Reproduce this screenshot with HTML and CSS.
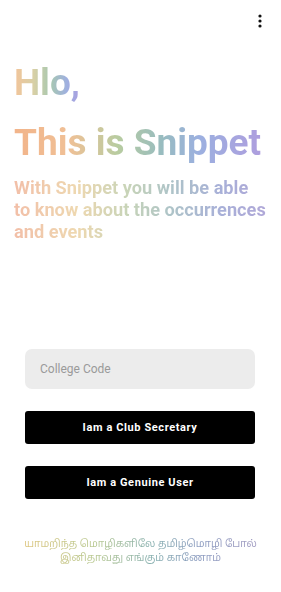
FILE: index.html
```html
<!DOCTYPE html>
<html>
<head>
<meta charset="utf-8">
<link rel="stylesheet" href="styles.css">
</head>
<body>
<div class="screen">
  <div class="topbar">
    <svg class="kebab" width="4" height="14" viewBox="0 0 4 14"><circle cx="2" cy="2" r="1.6"/><circle cx="2" cy="7" r="1.6"/><circle cx="2" cy="12" r="1.6"/></svg>
  </div>
  <div class="hero">
    <h1 class="title"><span class="grad g1">Hlo,</span></h1>
    <h1 class="title second"><span class="grad g2">This is Snippet</span></h1>
    <p class="lead grad g3">With Snippet you will be able<br>to know about the occurrences<br>and events</p>
  </div>
  <div class="form">
    <div class="input">College Code</div>
    <button class="btn">Iam a Club Secretary</button>
    <button class="btn">Iam a Genuine User</button>
  </div>
  <div class="quote-wrap"><p class="quote grad g4">யாமறிந்த மொழிகளிலே தமிழ்மொழி போல்<br>இனிதாவது எங்கும் காணோம்</p></div>
</div>
</body>
</html>
```
FILE: styles.css
```css
* { box-sizing: border-box; }
html, body { margin: 0; padding: 0; background: #fff; }
body { font-family: Roboto, "Noto Sans", sans-serif; width: 281px; height: 592px; overflow: hidden; }
.screen { display: flex; flex-direction: column; height: 592px; }
.topbar { height: 40px; display: flex; justify-content: flex-end; align-items: center; padding: 0 19px 0 0; padding-top: 1px; }
.kebab { fill: #111; }
.hero { padding: 0 0 0 14px; }
.title { margin: 0; font-size: 37px; font-weight: 700; line-height: 44px; }
.title:first-child { margin-top: 21px; }
.second { margin-top: 16px; }
.grad { -webkit-background-clip: text; background-clip: text; color: transparent; -webkit-text-fill-color: transparent; }
.g1 { background-image: linear-gradient(90deg, #f3c49a 0%, #d8d0a6 30%, #a8c8b0 55%, #9fb0e0 80%, #a99ee0 100%); }
.g2 { background-image: linear-gradient(90deg, #f2b48a 0%, #f0c096 22%, #b8cca0 42%, #98bcc0 60%, #9cb0e0 75%, #ae9ede 100%); }
.lead { display: inline-block; margin: 12px 0 0; font-size: 18.2px; font-weight: 700; line-height: 22px; white-space: nowrap; }
.g3 { background-image: linear-gradient(90deg, #f2bfa8 0%, #eed8b0 25%, #c8d4b8 45%, #aec4c8 62%, #a8b0d8 82%, #b0a8d8 100%); }
.form { margin-top: 106px; padding: 0 26px 0 25px; display: flex; flex-direction: column; }
.input { height: 40px; background: #ececec; border-radius: 7px; font-size: 12px; color: #9a9a9a; padding: 0 15px; display: flex; align-items: center; }
.btn { margin-top: 22px; height: 33px; background: #000; color: #fff; border: none; border-radius: 3px; font-family: Roboto, sans-serif; font-weight: 700; font-size: 11px; letter-spacing: 0.6px; }
.quote-wrap { margin-top: 37px; display: flex; justify-content: center; }
.quote { margin: 0; text-align: center; font-family: "Noto Sans", "Noto Sans Tamil", sans-serif; font-size: 10.2px; line-height: 14px; white-space: nowrap; }
.g4 { background-image: linear-gradient(90deg, #dcc47c 0%, #b8c890 30%, #88b0b0 55%, #8c9cc0 75%, #a09ac0 100%); }
```
